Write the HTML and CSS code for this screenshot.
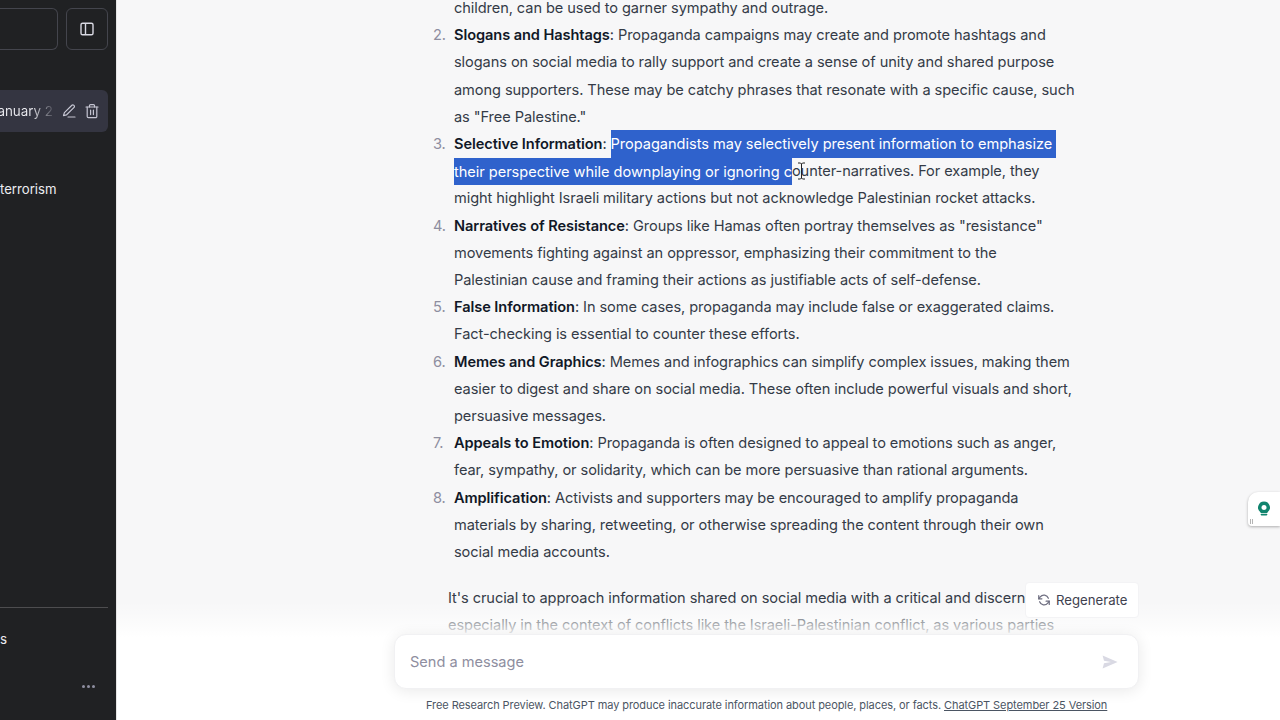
FILE: index.html
```html
<!DOCTYPE html>
<html lang="en">
<head>
<meta charset="utf-8">
<title>ChatGPT</title>
<link rel="stylesheet" href="styles.css">
</head>
<body>
<div class="app">
  <aside class="sidebar">
    <div class="top-row">
      <div class="new-chat"></div>
      <button class="toggle" aria-label="Toggle sidebar">
        <svg width="16" height="16" viewBox="0 0 16 16" fill="none" stroke="#d9d9e3" stroke-width="1.4"><rect x="2" y="2.2" width="12" height="11.6" rx="1.6"/><path d="M6.5 2.2v11.6"/></svg>
      </button>
    </div>
    <div class="chat-active">
      <span class="chat-active-text">January 2</span>
      <svg class="row-icon" width="16" height="16" viewBox="0 0 16 16" fill="none" stroke="#c5c5d2" stroke-width="1.2" stroke-linecap="round" stroke-linejoin="round"><path d="M2.5 12.6 3.4 9.6 10.9 2.2a1.2 1.2 0 0 1 1.7 0l.5.5a1.2 1.2 0 0 1 0 1.7L5.6 11.8Z"/><path d="M7 14h7"/></svg>
      <svg class="row-icon" width="16" height="16" viewBox="0 0 16 16" fill="none" stroke="#c5c5d2" stroke-width="1.2" stroke-linecap="round" stroke-linejoin="round"><path d="M2 4h12"/><path d="M5.5 4V2.6a1 1 0 0 1 1-1h3a1 1 0 0 1 1 1V4"/><path d="M3.2 4v9.4a1.2 1.2 0 0 0 1.2 1.2h7.2a1.2 1.2 0 0 0 1.2-1.2V4"/><path d="M6.6 7.2v4.4M9.4 7.2v4.4"/></svg>
    </div>
    <div class="chat-item">terrorism</div>
    <div class="sidebar-foot">
      <div class="user-name">s</div>
      <div class="dots"><i></i><i></i><i></i></div>
    </div>
  </aside>

  <main class="main">
    <div class="thread">
      <ol class="answer" start="1">
        <li class="cont">children, can be used to garner sympathy and outrage.</li>
        <li><span class="num">2.</span><div><b>Slogans and Hashtags</b>: Propaganda campaigns may create and promote hashtags and<br>slogans on social media to rally support and create a sense of unity and shared purpose<br>among supporters. These may be catchy phrases that resonate with a specific cause, such<br>as "Free Palestine."</div></li>
        <li><span class="num">3.</span><div><b>Selective Information</b>: <span class="sel">Propagandists may selectively present information to emphasize&nbsp;<br>their perspective while downplaying or ignoring c</span>ounter-narratives. For example, they<br>might highlight Israeli military actions but not acknowledge Palestinian rocket attacks.</div></li>
        <li><span class="num">4.</span><div><b>Narratives of Resistance</b>: Groups like Hamas often portray themselves as "resistance"<br>movements fighting against an oppressor, emphasizing their commitment to the<br>Palestinian cause and framing their actions as justifiable acts of self-defense.</div></li>
        <li><span class="num">5.</span><div><b>False Information</b>: In some cases, propaganda may include false or exaggerated claims.<br>Fact-checking is essential to counter these efforts.</div></li>
        <li><span class="num">6.</span><div><b>Memes and Graphics</b>: Memes and infographics can simplify complex issues, making them<br>easier to digest and share on social media. These often include powerful visuals and short,<br>persuasive messages.</div></li>
        <li><span class="num">7.</span><div><b>Appeals to Emotion</b>: Propaganda is often designed to appeal to emotions such as anger,<br>fear, sympathy, or solidarity, which can be more persuasive than rational arguments.</div></li>
        <li><span class="num">8.</span><div><b>Amplification</b>: Activists and supporters may be encouraged to amplify propaganda<br>materials by sharing, retweeting, or otherwise spreading the content through their own<br>social media accounts.</div></li>
      </ol>
      <p class="closing">It's crucial to approach information shared on social media with a critical and discerning eye,<br>especially in the context of conflicts like the Israeli-Palestinian conflict, as various parties</p>
    </div>

    <svg class="ibeam" width="9" height="18" viewBox="0 0 9 18" fill="none" stroke="#222" stroke-width="1"><path d="M1 1h2.5l1 1 1-1H8M4.5 2v14M1 17h2.5l1-1 1 1H8"/></svg>

    <div class="composer-area">
      <div class="composer-col">
        <button class="regen">
          <svg width="14" height="14" viewBox="0 0 16 16" fill="none" stroke="#6e6e80" stroke-width="1.4" stroke-linecap="round" stroke-linejoin="round"><path d="M2 3v3.6h3.6"/><path d="M14 13v-3.6h-3.6"/><path d="M13 6a5.4 5.4 0 0 0-9.3-1.6L2 6.6M3 10a5.4 5.4 0 0 0 9.3 1.6L14 9.4"/></svg>
          <span>Regenerate</span>
        </button>
        <div class="composer">
          <span class="placeholder">Send a message</span>
          <svg width="16" height="16" viewBox="0 0 16 16"><path d="M.6 1.6 15.6 8 .6 14.4 2 9.2 9 8 2 6.8Z" fill="#d9d9e3"/></svg>
        </div>
      </div>
      <p class="disclaimer">Free Research Preview. ChatGPT may produce inaccurate information about people, places, or facts. <a>ChatGPT September 25 Version</a></p>
    </div>

    <div class="side-tab">
      <svg width="14" height="16" viewBox="0 0 14 16"><path d="M7 .5a6 6 0 0 1 3.4 10.9V12H3.6v-.6A6 6 0 0 1 7 .5Z" fill="#10846e"/><path d="M4.4 13.6h5.2" stroke="#10846e" stroke-width="1.6" stroke-linecap="round"/><circle cx="7" cy="6.4" r="2.5" fill="#fff"/></svg>
      <span class="grip"></span>
    </div>
  </main>
</div>
</body>
</html>
```
FILE: styles.css
```css
* { box-sizing: border-box; }
html, body { margin: 0; height: 100%; overflow: hidden; }
body { font-family: Inter, "Liberation Sans", sans-serif; background: #f7f7f8; }

.app { display: flex; height: 720px; width: 1280px; }

.sidebar {
  width: 116px;
  flex: none;
  background: #202123;
  display: flex;
  flex-direction: column;
  overflow: hidden;
  padding: 8px 8px 0 0;
  color: #ececf1;
}
.top-row { display: flex; gap: 8px; height: 42px; }
.new-chat {
  flex: 1;
  border: 1px solid #44454d;
  border-left: 0;
  border-radius: 0 6px 6px 0;
}
.toggle {
  width: 42px;
  height: 42px;
  padding: 0;
  background: transparent;
  border: 1px solid #44454d;
  border-radius: 6px;
  display: flex;
  align-items: center;
  justify-content: center;
}
.chat-active {
  margin-top: 40px;
  height: 42px;
  background: #343541;
  border-radius: 0 6px 6px 0;
  display: flex;
  align-items: center;
  padding-right: 8px;
  gap: 7px;
  overflow: hidden;
  font-size: 13.4px;
}
.chat-active-text {
  flex: 1;
  min-width: 0;
  display: flex;
  justify-content: flex-end;
  white-space: nowrap;
  padding-right: 1px;
  color: transparent;
  background: linear-gradient(90deg, #ececf1 55%, #4c4d58 100%);
  -webkit-background-clip: text;
  background-clip: text;
}
.row-icon { flex: none; }
.chat-item {
  margin-top: 47px;
  width: 55px;
  font-size: 13.2px;
  line-height: 20px;
  text-align: right;
  color: #ececf1;
}
.sidebar-foot {
  margin-top: auto;
  border-top: 1px solid #4d4d4f;
  height: 113px;
  display: flex;
  flex-direction: column;
}
.user-name { margin-top: 21px; font-size: 13.4px; line-height: 20px; }
.dots {
  margin-top: 36px;
  align-self: flex-end;
  margin-right: 13px;
  display: flex;
  gap: 2px;
}
.dots i { width: 3px; height: 3px; border-radius: 50%; background: #8e8ea0; }

.main { flex: 1; position: relative; overflow: hidden; border-left: 1px solid #e5e5e5; }

.thread {
  margin: -5px 0 0 315px;
  font-size: 14.6px;
  letter-spacing: -0.08px;
  line-height: 27.2px;
  color: #343b47;
  white-space: nowrap;
}
.answer { list-style: none; margin: 0; padding: 0 0 0 22px; }
.answer li { position: relative; }
.num {
  position: absolute;
  left: -21px;
  color: #8e8ea0;
}
.answer b { color: #111827; font-weight: 600; }
.sel {
  background: #2f62cc;
  color: #fff;
  padding: 4.7px 0;
  letter-spacing: -0.04px;
}
.closing { margin: 19px 0 0 16px; }

.ibeam { position: absolute; left: 680px; top: 162px; }

.composer-area {
  position: absolute;
  left: 0;
  right: 0;
  bottom: 0;
  height: 138px;
  background: linear-gradient(180deg, rgba(255,255,255,0) 14%, rgba(255,255,255,0.6) 31%, #fff 40%);
  display: flex;
  flex-direction: column;
}
.composer-col { margin-left: 277px; width: 745px; display: flex; flex-direction: column; }
.regen {
  align-self: flex-end;
  width: 114px;
  height: 36px;
  padding: 0 0 0 11px;
  background: #fff;
  border: 1px solid #f3f3f5;
  border-radius: 4px;
  display: flex;
  align-items: center;
  gap: 5px;
  font: 13.2px Inter, "Liberation Sans", sans-serif;
  color: #40414f;
}
.composer {
  margin-top: 16px;
  height: 55px;
  background: #fff;
  border: 1px solid #f1f1f3;
  border-radius: 12px;
  box-shadow: 0 2px 15px rgba(0,0,0,0.09);
  display: flex;
  align-items: center;
  justify-content: space-between;
  padding: 0 20px 0 15px;
}
.placeholder { font-size: 14.6px; letter-spacing: -0.02px; color: #8e8ea0; }
.disclaimer {
  margin: 9px 0 0 0;
  padding-left: 309px;
  font-size: 11px;
  letter-spacing: -0.08px;
  line-height: 14px;
  color: #4b5563;
  white-space: nowrap;
}
.disclaimer a { text-decoration: underline; }

.side-tab {
  position: absolute;
  right: 0;
  top: 492px;
  width: 32px;
  height: 34px;
  background: #fff;
  border-radius: 10px 0 0 4px;
  box-shadow: 0 1px 3px rgba(0,0,0,0.3);
  display: flex;
  align-items: center;
  padding-left: 9px;
}
.grip {
  position: absolute;
  left: 2px;
  bottom: 2px;
  width: 3px;
  height: 5px;
  border-left: 1px solid #b4b4b4;
  border-right: 1px solid #b4b4b4;
}
```
